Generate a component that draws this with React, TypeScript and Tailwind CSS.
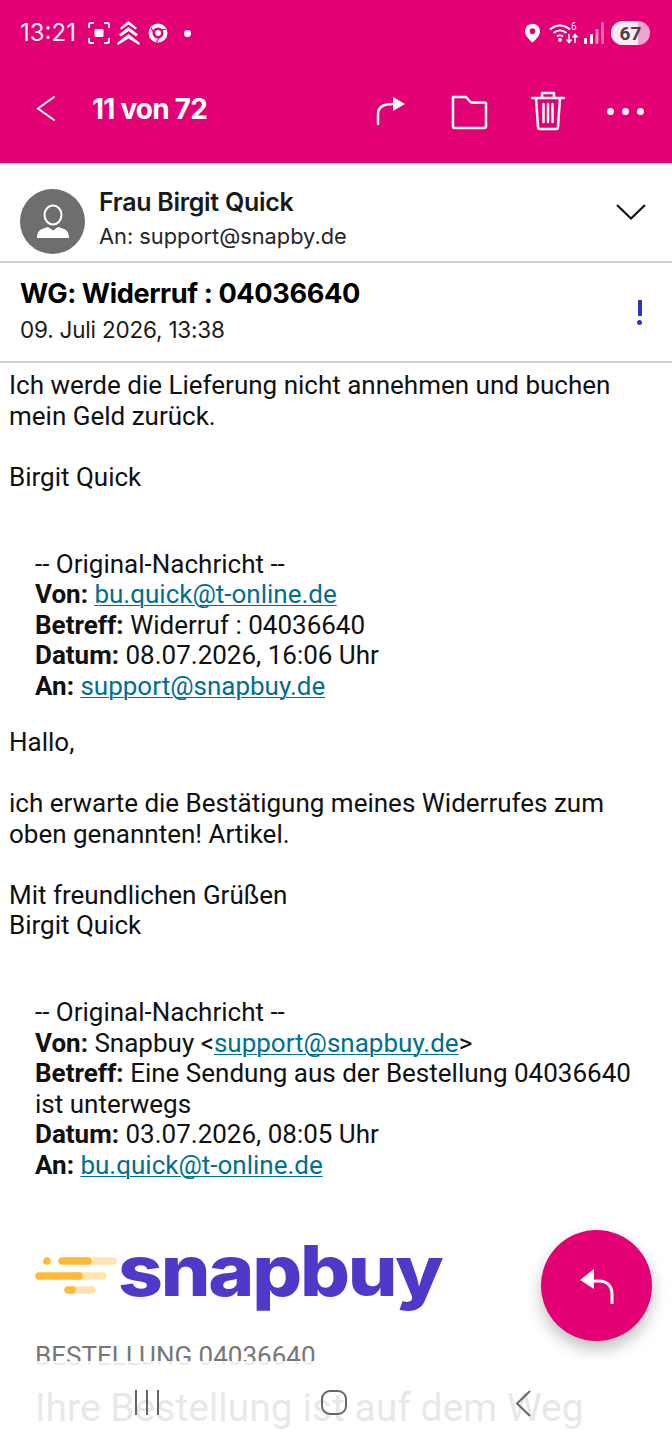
import React from "react";

const Link = ({ children }: { children: React.ReactNode }) => (
  <span className="text-[#00708f] underline decoration-1 underline-offset-2">{children}</span>
);

const StatusBar = () => (
  <div className="flex h-[62px] items-center pl-5 pr-[22px] pt-1 text-white">
    <span className="font-['Inter',sans-serif] text-[24px] leading-none opacity-95">13:21</span>
    <svg className="ml-[12px]" width="22" height="22" viewBox="0 0 22 22" fill="none" stroke="white" strokeWidth="2">
      <path d="M1 6V3a2 2 0 0 1 2-2h3M16 1h3a2 2 0 0 1 2 2v3M21 16v3a2 2 0 0 1-2 2h-3M6 21H3a2 2 0 0 1-2-2v-3" />
      <rect x="6.5" y="7" width="9" height="8" rx="1.5" fill="white" stroke="none" />
    </svg>
    <svg className="ml-[6px]" width="25" height="24" viewBox="0 0 25 24" fill="white">
      <path d="M12.5 0 21 7l-1.5 1.5-7-5-7 5L4 7z" />
      <path d="M12.5 6 22 13.5 20 15.5l-7.5-5.500-7.500 5.500L3 13.500z" />
      <path d="M12.500 13 24 22l-1 2-10.500-6.500L2 24l-1-2z" />
    </svg>
    <svg className="ml-[7px]" width="20" height="20" viewBox="0 0 20 20" fill="none">
      <circle cx="10" cy="10" r="7.500" stroke="white" strokeWidth="4" />
      <circle cx="10" cy="10" r="3" fill="white" />
      <path d="M10 6.500h8M7 12 3 4.500M12.500 12.500 8.500 19" stroke="#e20074" strokeWidth="1.200" />
    </svg>
    <span className="ml-[16px] h-[7px] w-[7px] rounded-full bg-white" />
    <div className="ml-auto flex items-center">
      <svg width="15" height="20" viewBox="0 0 16 20" fill="white">
        <path fillRule="evenodd" d="M8 0a8 8 0 0 1 8 8c0 4.500-4.500 9-8 12-3.500-3-8-7.500-8-12a8 8 0 0 1 8-8Zm0 5a3 3 0 1 0 0 6 3 3 0 0 0 0-6Z" />
      </svg>
      <svg className="ml-[9px]" width="30" height="22" viewBox="0 0 30 22" fill="none" stroke="white" strokeWidth="2">
        <path d="M1 7.500C7 2 15 2 21 7.500M4.500 11c4-3.500 9-3.500 13 0M8 14.500c2-1.700 4-1.700 6 0" />
        <circle cx="11" cy="18" r="2" fill="white" stroke="none" />
        <path d="M20 12v8M17.500 17.500 20 20.500l2.500-3M26 21v-8M23.500 15.500 26 12.500l2.500 3" strokeWidth="1.500" />
        <text x="22" y="8" fontSize="10" fill="white" stroke="none" fontFamily="Roboto, sans-serif">6</text>
      </svg>
      <svg className="ml-[5px]" width="20" height="22" viewBox="0 0 20 22" fill="white">
        <rect x="0" y="16" width="3" height="6" rx="1" />
        <rect x="6" y="12" width="3" height="10" rx="1" />
        <rect x="11.500" y="7" width="3" height="15" rx="1" opacity="0.55" />
        <rect x="17" y="0" width="3" height="22" rx="1" opacity="0.4" />
      </svg>
      <div className="relative ml-[7px] flex h-[24px] w-[39px] items-center justify-center overflow-hidden rounded-full bg-[#f3a3cb]">
        <div className="absolute inset-y-0 left-0 w-[27px] bg-[#fbeaf3]" />
        <span className="relative font-['Roboto',sans-serif] text-[19px] font-bold leading-none text-[#444]">67</span>
      </div>
    </div>
  </div>
);

const TopBar = () => (
  <div className="flex h-[101px] items-start bg-[#e20074] pt-[26px] text-white">
    <svg className="ml-[36px] mt-[7px]" width="20" height="28" viewBox="0 0 20 28" fill="none" stroke="white" strokeWidth="2" strokeLinecap="round">
      <path d="M18 2 2 13.500 18 25" />
    </svg>
    <span className="ml-[36px] font-['Inter',sans-serif] text-[28px] font-bold leading-[42px] tracking-[-0.8px]">11 von 72</span>
    <svg className="ml-[169px] mt-[4px]" width="30" height="36" viewBox="0 0 30 36" fill="white">
      <path d="M2 32V22c0-7 6-10 15-10" fill="none" stroke="white" strokeWidth="2.500" strokeLinecap="round" />
      <path d="M17 5 29 12 17 19z" />
    </svg>
    <svg className="ml-[45px] mt-[6px]" width="37" height="37" viewBox="0 0 37 37" fill="none" stroke="white" strokeWidth="2.500" strokeLinejoin="round">
      <path d="M2 3h13l5 5.500h13.500a1.500 1.500 0 0 1 1.500 1.500v22a2 2 0 0 1-2 2H3.500A1.500 1.500 0 0 1 2 32.500Z" />
    </svg>
    <svg className="ml-[43px] mt-[3px]" width="34" height="40" viewBox="0 0 34 40" fill="none" stroke="white" strokeWidth="2.500" strokeLinecap="round" strokeLinejoin="round">
      <path d="M1 7h32M11 7V2h12v5M5 7l2 29a2 2 0 0 0 2 2h16a2 2 0 0 0 2-2l2-29M12.500 13v18M17 13v18M21.500 13v18" />
    </svg>
    <div className="ml-[42px] mt-[20px] flex gap-[8px]">
      <span className="h-[7px] w-[7px] rounded-full bg-white" />
      <span className="h-[7px] w-[7px] rounded-full bg-white" />
      <span className="h-[7px] w-[7px] rounded-full bg-white" />
    </div>
  </div>
);

const SenderRow = () => (
  <div className="flex h-[100px] items-start border-b-2 border-[#cfcfcf] pl-5 pr-[26px] pt-[26px]">
    <div className="flex h-[65px] w-[65px] items-center justify-center rounded-full bg-[#6e6e6e]">
      <svg width="34" height="36" viewBox="0 0 34 36" fill="none">
        <ellipse cx="17" cy="11" rx="8.500" ry="9.500" stroke="white" strokeWidth="2" />
        <path d="M1 34c0-5 2-8 5-9l6-2 5 3.500 5-3.500 6 2c3 1 5 4 5 9z" fill="white" />
      </svg>
    </div>
    <div className="ml-[14px] font-['Inter',sans-serif]">
      <div className="-mt-[2px] text-[25px] font-semibold leading-[30px] tracking-[-0.3px] text-[#191919]">Frau Birgit Quick</div>
      <div className="mt-[4px] text-[21.800px] leading-[30px] text-[#262626]">An: support@snapby.de</div>
    </div>
    <svg className="ml-auto mt-[14px]" width="30" height="18" viewBox="0 0 30 18" fill="none" stroke="#111" strokeWidth="2.200">
      <path d="M1 2 15 15.500 29 2" />
    </svg>
  </div>
);

const SubjectRow = () => (
  <div className="flex h-[100px] items-start border-b-2 border-[#cfcfcf] pl-[20px] pr-[30px] pt-[14px] font-['Inter',sans-serif]">
    <div>
      <div className="text-[27.200px] font-bold leading-[34px] tracking-[-0.4px] text-black">WG: Widerruf : 04036640</div>
      <div className="mt-[4px] text-[22.500px] leading-[30px] tracking-[-0.2px] text-[#1a1a1a]">09. Juli 2026, 13:38</div>
    </div>
    <div className="ml-auto mt-[23px] flex flex-col items-center gap-[4px]">
      <span className="h-[16px] w-[4px] bg-[#2438c8]" />
      <span className="h-[5px] w-[5px] rounded-full bg-[#2438c8]" />
    </div>
  </div>
);

const Line = ({ children }: { children?: React.ReactNode }) => <div className="h-[30.500px]">{children}</div>;

const Quote = ({ children }: { children: React.ReactNode }) => <div className="my-[26px] ml-[26px] mr-[30px]">{children}</div>;

const MailBody = () => (
  <div className="pl-[9px] pt-[7px] font-['Roboto',sans-serif] text-[26px] leading-[30.500px] text-[#111]">
    <Line>Ich werde die Lieferung nicht annehmen und buchen</Line>
    <Line>mein Geld zurück.</Line>
    <Line />
    <Line>Birgit Quick</Line>
    <Line />
    <Quote>
      <Line>-- Original-Nachricht --</Line>
      <Line><b className="font-bold">Von:</b> <Link>bu.quick@t-online.de</Link></Line>
      <Line><b className="font-bold">Betreff:</b> Widerruf : 04036640</Line>
      <Line><b className="font-bold">Datum:</b> 08.07.2026, 16:06 Uhr</Line>
      <Line><b className="font-bold">An:</b> <Link>support@snapbuy.de</Link></Line>
    </Quote>
    <Line>Hallo,</Line>
    <Line />
    <Line>ich erwarte die Bestätigung meines Widerrufes zum</Line>
    <Line>oben genannten! Artikel.</Line>
    <Line />
    <Line>Mit freundlichen Grüßen</Line>
    <Line>Birgit Quick</Line>
    <Line />
    <Quote>
      <Line>-- Original-Nachricht --</Line>
      <Line><b className="font-bold">Von:</b> Snapbuy &lt;<Link>support@snapbuy.de</Link>&gt;</Line>
      <Line><b className="font-bold">Betreff:</b> Eine Sendung aus der Bestellung 04036640</Line>
      <Line>ist unterwegs</Line>
      <Line><b className="font-bold">Datum:</b> 03.07.2026, 08:05 Uhr</Line>
      <Line><b className="font-bold">An:</b> <Link>bu.quick@t-online.de</Link></Line>
    </Quote>
  </div>
);

const Logo = () => (
  <div className="ml-[35px] mt-[51px] flex h-[80px] items-center">
    <svg className="mt-[9px]" width="82" height="38" viewBox="0 0 82 38" fill="none" strokeLinecap="round" strokeWidth="7.500">
      <path d="M50 4h28" stroke="#ffe4b0" />
      <path d="M40 19h28" stroke="#ffe4b0" />
      <path d="M36 33h21" stroke="#ffe4b0" />
      <circle cx="12" cy="4" r="3.800" fill="#ffb938" />
      <path d="M27 4h26M4 19h40M33 33h4" stroke="#ffb938" />
    </svg>
    <span className="ml-[1px] origin-left scale-x-[1.120] font-['Inter',sans-serif] text-[70px] font-extrabold leading-none tracking-[-2px] text-[#5138c8]">snapbuy</span>
  </div>
);

const Order = () => (
  <div className="ml-[35px] mt-[30px] font-['Roboto',sans-serif]">
    <div className="text-[26px] leading-[30px] text-[#777]">BESTELLUNG 04036640</div>
    <div className="mt-[15px] text-[39px] leading-[44px] text-[#666]">Ihre Bestellung ist auf dem Weg</div>
  </div>
);

const BottomNav = () => (
  <div className="absolute inset-x-0 bottom-0 flex h-[79px] items-start bg-white/85 pt-[29px]">
    <div className="ml-[135px] flex gap-[9px]">
      <span className="h-[25px] w-[2px] bg-[#666]" />
      <span className="h-[25px] w-[2px] bg-[#666]" />
      <span className="h-[25px] w-[2px] bg-[#666]" />
    </div>
    <span className="ml-[162px] h-[25px] w-[26px] rounded-[9px] border-2 border-[#666]" />
    <svg className="ml-[167px]" width="18" height="27" viewBox="0 0 18 27" fill="none" stroke="#666" strokeWidth="2">
      <path d="M16 1 3 13.500 16 26" />
    </svg>
  </div>
);

const ReplyButton = () => (
  <div className="absolute bottom-[99px] right-[20px] flex h-[111px] w-[111px] items-center justify-center rounded-full bg-[#e20074] shadow-[0_8px_16px_rgba(0,0,0,0.25)]">
    <svg width="36" height="36" viewBox="0 0 36 36" fill="white">
      <path d="M33 35v-9c0-8-5-13-13-13h-4" fill="none" stroke="white" strokeWidth="3" strokeLinecap="round" />
      <path d="M1 12 15 1v20z" />
    </svg>
  </div>
);

export default function App() {
  return (
    <div className="relative h-[1440px] w-[672px] overflow-hidden bg-white">
      <div className="bg-[#e20074]">
        <StatusBar />
        <TopBar />
      </div>
      <SenderRow />
      <SubjectRow />
      <MailBody />
      <Logo />
      <Order />
      <ReplyButton />
      <BottomNav />
    </div>
  );
}
